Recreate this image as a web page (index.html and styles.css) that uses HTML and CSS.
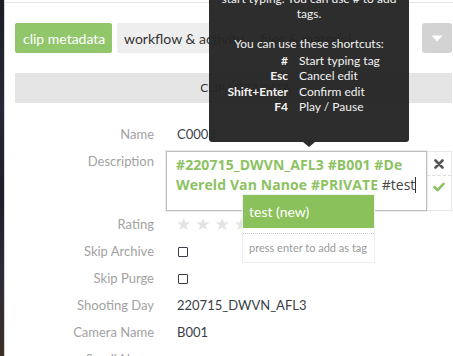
FILE: index.html
```html
<!DOCTYPE html>
<html>
<head>
<meta charset="utf-8">
<link rel="stylesheet" href="styles.css">
</head>
<body>
<div class="page">
  <div class="backdrop"></div>
  <div class="panel">
    <div class="topline"></div>
    <div class="content">
      <div class="tabs">
        <div class="tab tab-active">clip metadata</div>
        <div class="tab tab-plain">workflow &amp; activity</div>
        <div class="tab tab-muted">files &amp; material</div>
        <div class="menu-btn">
          <svg width="12" height="7" viewBox="0 0 12 7"><path d="M0.5 0.5 H11.5 L6 6.5 Z" fill="#fff"/></svg>
        </div>
      </div>
      <div class="section-bar">CLIP METADATA</div>
      <div class="fields">
        <div class="row">
          <div class="label">Name</div>
          <div class="value">C0003</div>
        </div>
        <div class="row">
          <div class="label">Description</div>
          <div class="editor">
            <div class="editor-box"><span class="tag">#220715_DWVN_AFL3 #B001 #De</span><br><span class="tag">Wereld Van Nanoe #PRIVATE</span> <span class="typing">#test</span><span class="caret"></span></div>
            <div class="editor-actions">
              <div class="action">
                <svg width="10" height="10" viewBox="0 0 10 10"><path d="M1.5 1.5 L8.5 8.5 M8.5 1.5 L1.5 8.5" stroke="#555" stroke-width="2.6" stroke-linecap="round"/></svg>
              </div>
              <div class="action">
                <svg width="12" height="10" viewBox="0 0 12 10"><path d="M1.5 5.2 L4.6 8.2 L10.5 1.8" stroke="#8dc263" stroke-width="2.6" fill="none" stroke-linecap="round" stroke-linejoin="round"/></svg>
              </div>
            </div>
            <div class="suggest">
              <div class="suggest-item">test (new)</div>
              <div class="suggest-hint">press enter to add as tag</div>
            </div>
          </div>
        </div>
        <div class="row">
          <div class="label">Rating</div>
          <div class="value stars"><span>★</span><span>★</span><span>★</span><span>★</span><span>★</span></div>
        </div>
        <div class="row">
          <div class="label">Skip Archive</div>
          <div class="value"><span class="checkbox"></span></div>
        </div>
        <div class="row">
          <div class="label">Skip Purge</div>
          <div class="value"><span class="checkbox"></span></div>
        </div>
        <div class="row">
          <div class="label">Shooting Day</div>
          <div class="value">220715_DWVN_AFL3</div>
        </div>
        <div class="row">
          <div class="label">Camera Name</div>
          <div class="value">B001</div>
        </div>
        <div class="row">
          <div class="label">Scroll Name</div>
          <div class="value"></div>
        </div>
      </div>
    </div>
  </div>
  <div class="tooltip">
    <div class="tip-line">start typing. You can use # to add</div>
    <div class="tip-line">tags.</div>
    <div class="tip-line">&nbsp;</div>
    <div class="tip-line">You can use these shortcuts:</div>
    <div class="shortcuts">
      <span class="key">#</span><span class="desc">Start typing tag</span>
      <span class="key">Esc</span><span class="desc">Cancel edit</span>
      <span class="key">Shift+Enter</span><span class="desc">Confirm edit</span>
      <span class="key">F4</span><span class="desc">Play / Pause</span>
    </div>
  </div>
</div>
</body>
</html>
```
FILE: styles.css
```css
* { box-sizing: border-box; }

html, body {
  margin: 0;
  padding: 0;
  background: #fff;
}

body {
  font-family: Lato, "Open Sans", sans-serif;
  width: 453px;
  height: 356px;
  overflow: hidden;
}

.page {
  position: relative;
  display: flex;
  height: 356px;
  overflow: hidden;
}

.backdrop {
  flex: none;
  width: 4px;
  background: linear-gradient(#1b1d24, #262838 30%, #1d1e28 55%, #2c2a3a 75%, #3b2e24);
}

.panel {
  flex: 1;
  min-width: 0;
  border-left: 1px solid #d6d6d6;
}

.topline {
  height: 3px;
  border-bottom: 1px solid #e6e6e6;
}

.content {
  padding: 20px 1px 0 10px;
}

.tabs {
  display: flex;
  height: 30px;
  gap: 5px;
}

.tab {
  display: flex;
  align-items: center;
  font-size: 14px;
  color: #333;
  border-radius: 2px;
  padding: 0 7px;
  white-space: nowrap;
}

.tab-active {
  width: 97px;
  padding: 0 8px;
  background: #92c66b;
  color: #fff;
}

.tab-plain {
  background: #eeeeee;
}

.tab-muted {
  padding: 0 4px;
}

.menu-btn {
  margin-left: auto;
  width: 30px;
  background: #d3d3d3;
  border-radius: 3px;
  display: flex;
  align-items: center;
  justify-content: center;
}

.section-bar {
  margin-top: 20px;
  height: 30px;
  line-height: 30px;
  background: #e5e5e5;
  text-align: center;
  font-size: 12px;
  color: #333;
  padding-left: 24px;
}

.fields {
  margin-top: 18px;
}

.row {
  display: grid;
  grid-template-columns: 139px 1fr;
  column-gap: 12px;
  min-height: 27px;
  align-items: start;
}

.label {
  text-align: right;
  line-height: 27px;
  font-size: 13px;
  color: #a2a2a2;
  white-space: nowrap;
}

.value {
  line-height: 27px;
  font-size: 13px;
  color: #3a3e46;
  padding-left: 11px;
  white-space: nowrap;
}

.editor {
  position: relative;
  margin-top: 3px;
  height: 60px;
  display: flex;
}

.editor-box {
  flex: 1;
  border: 1px solid #bdbdbd;
  box-shadow: 0 0 0 1px #ececec;
  padding: 3px 9px;
  font-family: "Open Sans", sans-serif;
  font-size: 14px;
  line-height: 20px;
  white-space: nowrap;
}

.tag {
  font-weight: 700;
  color: #8dc263;
  letter-spacing: 0.1px;
}

.typing {
  color: #444;
  font-weight: 400;
}

.caret {
  display: inline-block;
  width: 1px;
  height: 16px;
  background: #333;
  vertical-align: -3px;
}

.editor-actions {
  flex: none;
  width: 25px;
  border: 1px solid #e8e8e8;
  border-left: none;
  display: flex;
  flex-direction: column;
}

.action {
  height: 23px;
  display: flex;
  align-items: center;
  justify-content: center;
}

.action + .action {
  border-top: 1px dashed #dcdcdc;
}

.suggest {
  position: absolute;
  left: 76px;
  top: 43px;
  width: 133px;
  background: #fff;
  border: 1px solid #efefef;
  z-index: 2;
}

.suggest-item {
  height: 33px;
  line-height: 33px;
  background: #8bc15b;
  color: #fff;
  font-size: 14px;
  padding-left: 6px;
}

.suggest-hint {
  margin-top: 5px;
  border-top: 1px dotted #c8c8c8;
  height: 29px;
  line-height: 28px;
  font-size: 11px;
  color: #9a9a9a;
  padding-left: 6px;
}

.stars {
  display: flex;
  gap: 4px;
  color: #e3e3e3;
  font-family: "DejaVu Sans", sans-serif;
  font-size: 17px;
  padding-left: 10px;
}

.checkbox {
  display: inline-block;
  width: 10px;
  height: 10px;
  border: 1.5px solid #3a3e46;
  border-radius: 1px;
  vertical-align: -1px;
  margin-left: 1px;
}

.tooltip {
  position: absolute;
  left: 209px;
  top: -9px;
  width: 200px;
  height: 151px;
  background: rgba(36, 36, 36, 0.96);
  color: #f2f2f2;
  font-size: 12px;
  line-height: 15px;
  text-align: center;
  border-radius: 3px;
  z-index: 5;
}

.tooltip::after {
  content: "";
  position: absolute;
  left: 94px;
  bottom: -5px;
  border-left: 6px solid transparent;
  border-right: 6px solid transparent;
  border-top: 5px solid rgba(36, 36, 36, 0.96);
}

.shortcuts {
  margin-top: 1.5px;
  display: grid;
  grid-template-columns: 79px 1fr;
  column-gap: 11px;
  line-height: 15.5px;
  text-align: left;
}

.key {
  text-align: right;
  font-weight: 700;
  white-space: nowrap;
}

.desc {
  white-space: nowrap;
}
```
